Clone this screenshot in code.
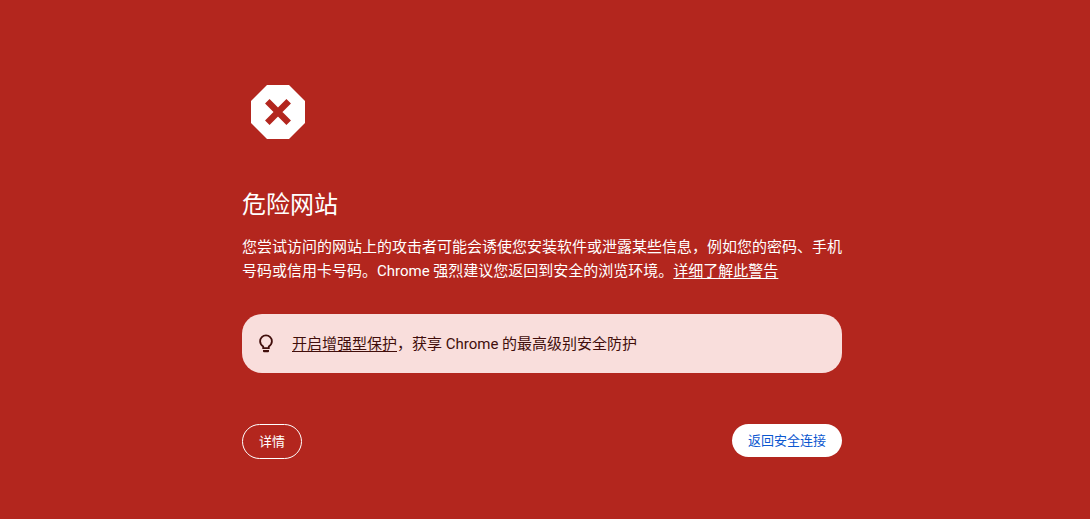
<main>
  <svg class="stop" viewBox="0 0 54 54" aria-hidden="true">
    <path fill="#fff" d="M16 0h22l16 16v22L38 54H16L0 38V16z" />
    <path stroke="#b3261e" stroke-width="6.400" d="M16.300 16.300l21.400 21.400M37.700 16.300L16.300 37.700" />
  </svg>
  <h1>危险网站</h1>
  <p>您尝试访问的网站上的攻击者可能会诱使您安装软件或泄露某些信息，例如您的密码、手机号码或信用卡号码。Chrome 强烈建议您返回到安全的浏览环境。<a href="#learn">详细了解此警告</a></p>
  <div class="promo">
    <svg class="bulb" viewBox="0 0 24 24" aria-hidden="true">
      <path fill="none" stroke="currentColor" stroke-width="1.800" d="M9.200 16.100v-1.700C7.200 13.200 6.100 11.500 6.100 9.300a5.900 5.900 0 0 1 11.800 0c0 2.200-1.100 3.900-3.100 5.100v1.700z" />
      <path fill="currentColor" d="M9 18h6v1.200a1 1 0 0 1-1 1h-4a1 1 0 0 1-1-1z" />
    </svg>
    <span><a href="#enhanced">开启增强型保护</a>，获享 Chrome 的最高级别安全防护</span>
  </div>
  <div class="actions">
    <button class="details">详情</button>
    <button class="safe">返回安全连接</button>
  </div>
</main>

<style>
  :global(body) {
    padding-right: 6px;
    background: #b3261e;
  }
  main {
    max-width: 600px;
    margin: 0 auto;
    padding-top: 85px;
    color: #fff;
    font-family: Roboto, "Noto Sans CJK SC", sans-serif;
    font-size: 15px;
    line-height: 24px;
  }
  .stop {
    display: block;
    width: 54px;
    height: 54px;
    margin-left: 9px;
  }
  h1 {
    margin: 48px 0 12px;
    font-size: 24px;
    font-weight: 400;
    line-height: 36px;
  }
  p {
    margin: 0;
  }
  a {
    color: inherit;
    text-underline-offset: 2px;
  }
  .promo {
    display: flex;
    align-items: center;
    gap: 14px;
    margin-top: 31px;
    padding: 18px 12px 17px;
    border-radius: 20px;
    background: #f9dedc;
    color: #410e0b;
  }
  .bulb {
    width: 24px;
    height: 24px;
  }
  .actions {
    display: flex;
    align-items: flex-start;
    justify-content: space-between;
    margin-top: 51px;
  }
  button {
    border-radius: 20px;
    padding: 0 16px;
    font-family: inherit;
    font-size: 13px;
    line-height: 33px;
    cursor: pointer;
  }
  .details {
    border: 1px solid #fff;
    background: transparent;
    color: #fff;
  }
  .safe {
    border: 0;
    background: #fff;
    color: #0b57d0;
  }
</style>
